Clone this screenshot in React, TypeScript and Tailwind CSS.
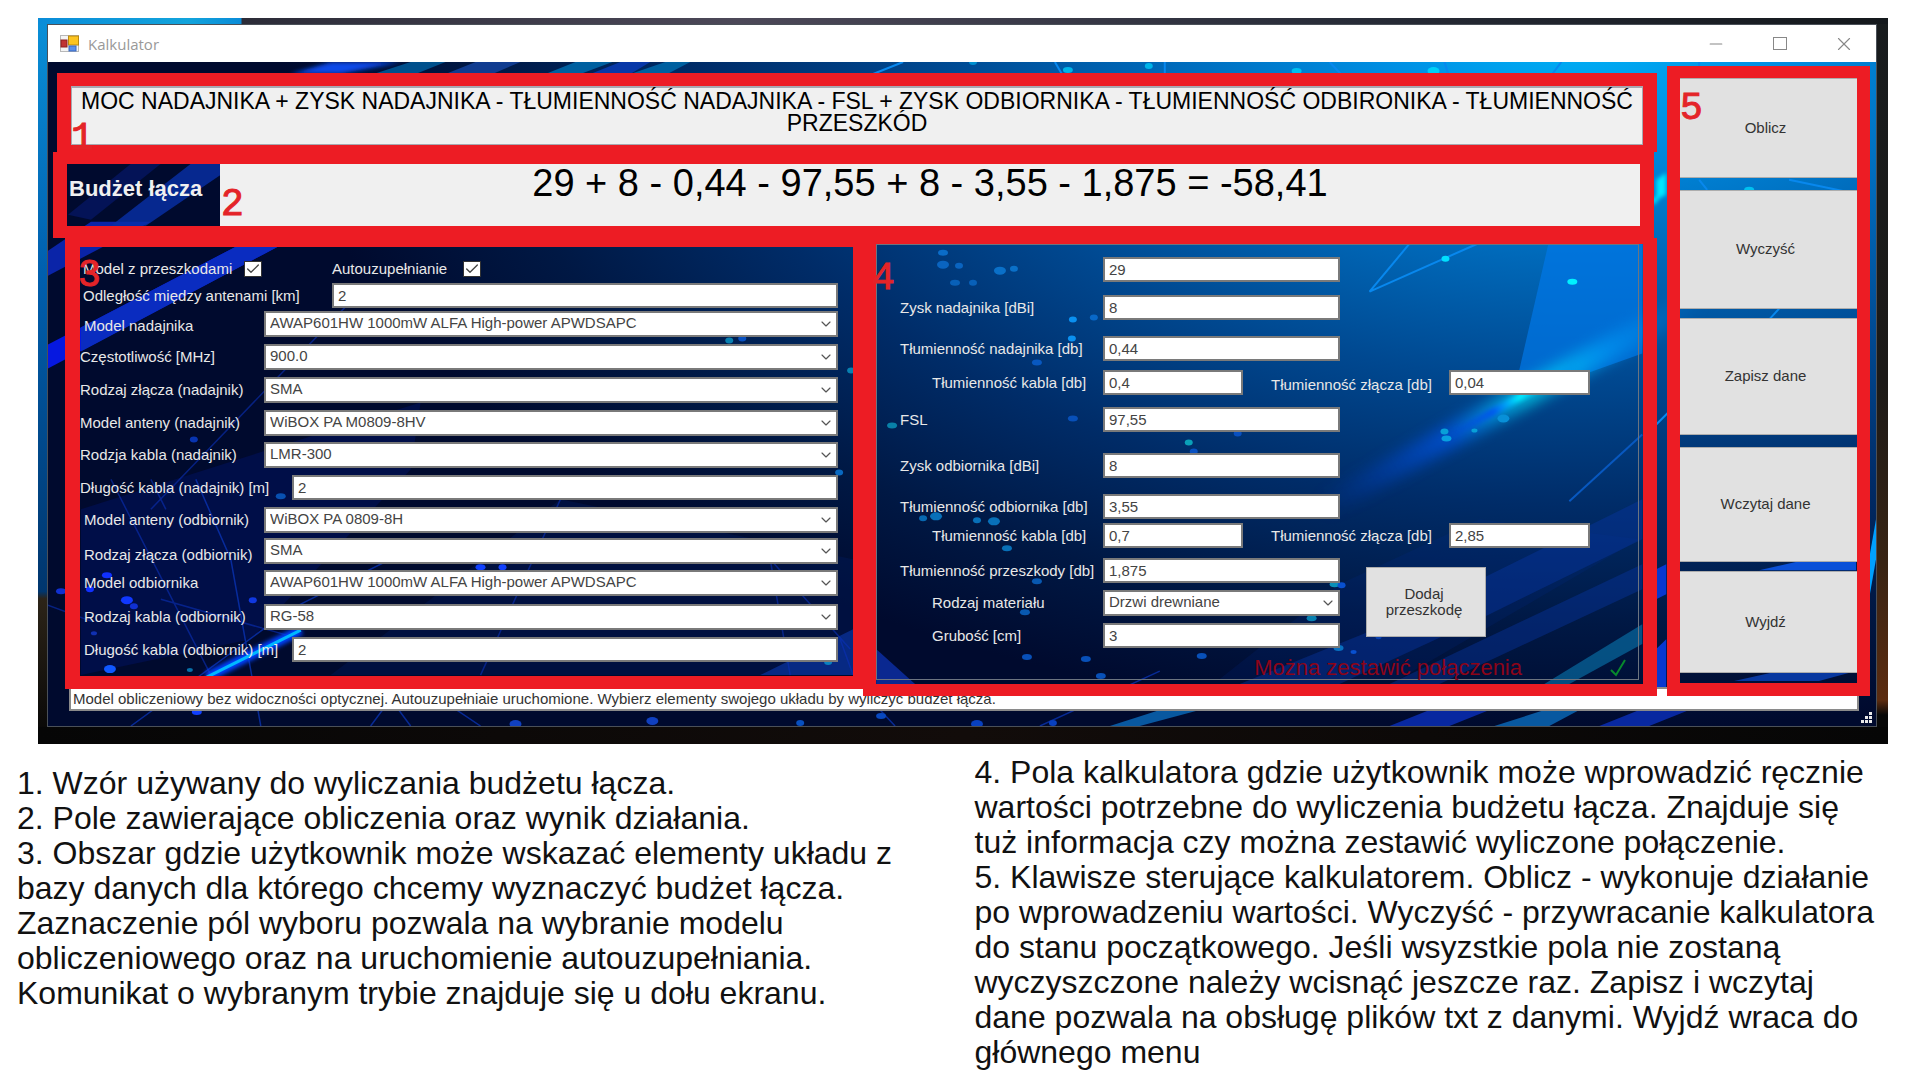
import type { ReactNode } from "react";
import { Check, ChevronDown, Minus, Square, X } from "lucide-react";

const fieldClass =
  "block w-full rounded-none border-2 border-[#7a7a7a] bg-white pl-1 text-[15px] leading-[18px] text-[#444] outline-none";

type Row = {
  id: string;
  label: string;
  value: string;
  kind: "select" | "input";
  gap: string;
  labelClass: string;
};

const W_WIDE = "w-[252px]";
const W_SELECT = "w-[184px]";
const W_LENGTH = "w-[212px]";

const rows: Row[] = [
  { id: "dist", label: "Odległość między antenami [km]", value: "2", kind: "input", gap: "mt-[7px]", labelClass: W_WIDE + " pl-[3px]" },
  { id: "tx", label: "Model nadajnika", value: "AWAP601HW 1000mW ALFA High-power APWDSAPC", kind: "select", gap: "mt-[3px]", labelClass: W_SELECT + " pl-1 pt-1" },
  { id: "freq", label: "Częstotliwość [MHz]", value: "900.0", kind: "select", gap: "mt-[7px]", labelClass: W_SELECT },
  { id: "conTx", label: "Rodzaj złącza (nadajnik)", value: "SMA", kind: "select", gap: "mt-[7px]", labelClass: W_SELECT },
  { id: "antTx", label: "Model anteny (nadajnik)", value: "WiBOX PA M0809-8HV", kind: "select", gap: "mt-[7px]", labelClass: W_SELECT },
  { id: "cabTx", label: "Rodzja kabla (nadajnik)", value: "LMR-300", kind: "select", gap: "mt-[6px]", labelClass: W_SELECT },
  { id: "lenTx", label: "Długość kabla (nadajnik) [m]", value: "2", kind: "input", gap: "mt-[7px]", labelClass: W_LENGTH },
  { id: "antRx", label: "Model anteny (odbiornik)", value: "WiBOX PA 0809-8H", kind: "select", gap: "mt-[7px]", labelClass: W_SELECT + " pl-1" },
  { id: "conRx", label: "Rodzaj złącza (odbiornik)", value: "SMA", kind: "select", gap: "mt-[5px]", labelClass: W_SELECT + " pl-1 pt-2" },
  { id: "rx", label: "Model odbiornika", value: "AWAP601HW 1000mW ALFA High-power APWDSAPC", kind: "select", gap: "mt-[6px]", labelClass: W_SELECT + " pl-1" },
  { id: "cabRx", label: "Rodzaj kabla (odbiornik)", value: "RG-58", kind: "select", gap: "mt-[8px]", labelClass: W_SELECT + " pl-1" },
  { id: "lenRx", label: "Długość kabla (odbiornik) [m]", value: "2", kind: "input", gap: "mt-[7px]", labelClass: W_LENGTH + " pl-1" },
];

function TextField({ id, value, label }: { id: string; value: string; label?: string }) {
  return <input id={id} type="text" defaultValue={value} aria-label={label} className={fieldClass + " h-[25px]"} />;
}

function SelectField({ id, value }: { id: string; value: string }) {
  return (
    <div className="grid items-center">
      <select id={id} defaultValue={value} className={fieldClass + " col-start-1 row-start-1 h-[26px] appearance-none pb-0.5"}>
        <option>{value}</option>
      </select>
      <ChevronDown className="pointer-events-none col-start-1 row-start-1 mr-1 size-4 justify-self-end text-[#555]" strokeWidth={1.75} />
    </div>
  );
}

function CheckField({ id, label, className }: { id: string; label: string; className: string }) {
  return (
    <div className={"flex items-center " + className}>
      <label htmlFor={id} className="whitespace-nowrap">{label}</label>
      <span className="grid place-items-center">
        <input id={id} type="checkbox" defaultChecked className="peer col-start-1 row-start-1 h-4 w-[18px] appearance-none border border-[#333] bg-white" />
        <Check className="pointer-events-none invisible col-start-1 row-start-1 size-4 text-[#444] peer-checked:visible" strokeWidth={2} />
      </span>
    </div>
  );
}

function Marker({ n, className }: { n: string; className: string }) {
  return (
    <span aria-hidden="true" className={"pointer-events-none absolute z-20 font-['Liberation_Mono',monospace] text-[38px] leading-[38px] text-[#e42428] [-webkit-text-stroke:1px_#e42428] " + className}>
      {n}
    </span>
  );
}

function ValueRow({ id, label, value, gap, sub, half, children }: {
  id: string; label: string; value: string; gap: string; sub?: boolean; half?: boolean; children?: ReactNode;
}) {
  return (
    <div className={"flex items-center " + gap}>
      <label htmlFor={id} className={sub ? "w-[203px] shrink-0 whitespace-nowrap pl-8" : "w-[203px] shrink-0 whitespace-nowrap"}>{label}</label>
      <div className={half ? "w-[140px]" : "w-[237px]"}>
        <TextField id={id} value={value} />
      </div>
      {children}
    </div>
  );
}

function ConnectorLoss({ id, value, labelClass }: { id: string; value: string; labelClass?: string }) {
  return (
    <>
      <label htmlFor={id} className={"ml-7 w-[178px] shrink-0 whitespace-nowrap " + (labelClass ?? "")}>Tłumienność złącza [db]</label>
      <div className="w-[141px]"><TextField id={id} value={value} /></div>
    </>
  );
}

const dots: [number, number, number, string][] = [
  [943, 253, 5, "#0a6cc8"], [943, 265, 6, "#0a64c0"], [959, 266, 4, "#0a64c0"], [1000, 271, 6, "#0a70c8"], [1014, 269, 4, "#0a70c8"],
  [955, 283, 5, "#0860b8"], [973, 283, 4, "#0860b8"], [1073, 320, 4, "#0a90f0"], [1094, 318, 4, "#0868c8"], [1072, 339, 4, "#0a90f0"],
  [1037, 363, 5, "#0858c0"], [892, 426, 5, "#0880a8"], [1073, 419, 5, "#0850b8"], [1238, 434, 4, "#0850c0"], [1189, 443, 4, "#0aa0b8"], [1194, 452, 4, "#0850c0"],
  [923, 519, 4, "#0868b0"], [936, 517, 6, "#0870b8"], [977, 521, 4, "#0870b8"], [994, 522, 6, "#0870b8"], [1007, 549, 5, "#0870b8"],
  [1037, 582, 5, "#0858b0"], [1025, 613, 5, "#0858b0"], [1027, 658, 5, "#0850b8"], [1086, 660, 5, "#0850b8"], [1202, 657, 5, "#0850b8"], [1101, 677, 5, "#0850b8"],
  [1335, 585, 5, "#0890b8"], [1342, 586, 4, "#0850d0"], [1312, 619, 5, "#0880b0"], [1339, 649, 5, "#0870c0"], [1354, 653, 3, "#0850d0"], [1379, 638, 3, "#0840b0"],
  [1446, 259, 4, "#00e0ff"], [1573, 282, 5, "#00f0ff"], [1504, 419, 6, "#0890d8"], [1445, 432, 4, "#08a0d8"], [1475, 431, 3, "#08a0d8"], [1447, 439, 5, "#08a0e0"],
  [1068, 70, 5, "#00b4e8"], [1149, 66, 4, "#00b4e8"], [973, 62, 4, "#0090d0"], [1297, 71, 5, "#00c0f0"], [1434, 71, 6, "#00d0f8"], [1750, 190, 5, "#00c0f0"],
  [193, 440, 4, "#0834b0"], [280, 497, 5, "#0850b0"], [729, 341, 4, "#0880b0"], [742, 339, 4, "#0850c0"], [851, 371, 4, "#0880b0"], [839, 473, 4, "#0868c0"],
  [106, 576, 5, "#1030ff"], [89, 590, 4, "#1030ff"], [126, 601, 6, "#1038ff"], [133, 607, 4, "#1030d0"], [252, 601, 4, "#1038e0"], [60, 592, 5, "#1030d0"],
  [109, 670, 6, "#1058ff"], [93, 634, 3, "#1030b0"], [189, 671, 3, "#0870a8"], [196, 713, 5, "#1040ff"], [515, 725, 6, "#1040c0"], [652, 722, 6, "#1040c0"],
  [800, 724, 4, "#0850c0"], [480, 568, 5, "#1040ff"], [502, 568, 4, "#1040ff"], [828, 663, 4, "#0880c0"], [881, 717, 5, "#0848c0"], [977, 725, 6, "#0840c0"], [1053, 724, 4, "#0840c0"],
];

function FormBackdrop() {
  return (
    <svg aria-hidden="true" className="absolute inset-0 size-full" viewBox="47 62 1830 665" preserveAspectRatio="none">
      <defs>
        <radialGradient id="sky" gradientUnits="userSpaceOnUse" cx="0" cy="0" r="1" gradientTransform="translate(1580 30) scale(1300 700)">
          <stop offset="0" stopColor="#00b4f8" />
          <stop offset="0.15" stopColor="#0090e4" />
          <stop offset="0.33" stopColor="#0068b8" />
          <stop offset="0.5" stopColor="#004890" />
          <stop offset="0.68" stopColor="#002c68" />
          <stop offset="0.85" stopColor="#001844" />
          <stop offset="1" stopColor="#000a2e" />
        </radialGradient>
        <linearGradient id="beam" x1="0" x2="1">
          <stop offset="0" stopColor="#0040d0" stopOpacity="0" />
          <stop offset="0.35" stopColor="#0058f0" />
          <stop offset="0.55" stopColor="#00f0ff" />
          <stop offset="0.75" stopColor="#009cf8" />
          <stop offset="1" stopColor="#0080e8" stopOpacity="0" />
        </linearGradient>
        <filter id="soft" x="-20%" y="-200%" width="140%" height="500%"><feGaussianBlur stdDeviation="7" /></filter>
        <filter id="glow" x="-50%" y="-50%" width="200%" height="200%"><feGaussianBlur stdDeviation="2" /></filter>
      </defs>
      <rect x="47" y="62" width="1830" height="665" fill="url(#sky)" />
      <path d="M47 251L90 222L150 222L47 276Z" fill="#0a24a8" />
      <path d="M47 345L235 247H277L47 369Z" fill="#0618e0" />
      <path d="M80 328L235 247H277L80 352Z" fill="#0a2cc0" />
      <path d="M110 226L190 164H220V175L145 226Z" fill="#0830a8" opacity="0.8" />
      <path d="M67 215L130 164H160L90 220Z" fill="#081c80" opacity="0.5" />
      <path d="M290 74L330 62H400L340 74Z" fill="#0848e8" filter="url(#glow)" />
      <path d="M373 74L410 62H445L415 74Z" fill="#00508c" />
      <path d="M445 74L475 62H520L492 74Z" fill="#103c90" />
      <path d="M545 74L575 62H612L580 74ZM630 74L665 62H690L667 74Z" fill="#0060a0" />
      <path d="M590 74L620 62H650L630 74Z" fill="#0838a8" />
      <path d="M80 510L300 440L420 403L410 470L250 640L80 676Z" fill="#001470" opacity="0.4" />
      <path d="M430 600L560 500L853 560V676H330Z" fill="#001c60" opacity="0.35" />
      <path d="M760 676L853 630V676Z" fill="#0a34a0" opacity="0.7" />
      <path d="M876 650L915 685H876Z" fill="#0a2890" />
      <path d="M345 307L150 510M150 480L165 510M160 600L300 640M110 480L210 676M47 606L90 622M560 500L480 676M770 560L790 676M770 560L850 650M840 640L853 676" stroke="#0a30b8" strokeWidth="1.5" fill="none" opacity="0.6" />
      <path d="M195 480L230 560L260 727M130 727L290 610L430 540M370 727L390 700L410 727M440 700L480 727M1040 727L1160 672M880 711L895 727" stroke="#0a38c0" strokeWidth="1.5" fill="none" opacity="0.7" />
      <path d="M206 678L300 631" stroke="#0040ff" strokeWidth="10" filter="url(#glow)" />
      <path d="M206 678L300 631" stroke="#00b8ff" strokeWidth="3" />
      <path d="M1549 244L1520 370V398L1643 354V244Z" fill="#0078e8" opacity="0.7" />
      <path d="M1410 244L1370 292L1478 244M1330 62L1345 78M1445 62L1450 78M1562 62L1550 78M1670 412L1657 425M1055 62L1062 74M1165 62V74M903 62L873 74M1700 180L1708 190M1790 180L1857 194M1780 309L1770 320M1700 62V74" stroke="#0888ee" strokeWidth="2" fill="none" />
      <path d="M1643 435L1570 502" stroke="#0858c0" strokeWidth="2" />
      <path d="M1340 585L1480 520L1640 540L1400 680H1220Z" fill="#00309c" opacity="0.15" />
      <path d="M1340 685L1480 620L1643 540V500L1400 620L1240 685ZM1440 685L1643 590V565L1390 685Z" fill="#0838a8" opacity="0.4" />
      <path d="M1570 685L1643 645V625L1545 685Z" fill="#0878b0" opacity="0.6" />
      <path d="M1657 600V570L1667 565V595ZM1657 690V650L1667 640V690Z" fill="#0838d0" />
      <path d="M1657 200V180L1667 173V195ZM1655 205L1650 201L1667 190" fill="#00e8ff" filter="url(#glow)" />
      <path d="M1760 571L1800 562H1857V571Z" fill="#0a50d8" />
      <path d="M1735 682L1780 672H1857L1820 682Z" fill="#0838a0" />
      <path d="M1870 560V600L1877 560V520Z" fill="#00a0ff" />
      <path d="M1495 727L1545 711H1580L1550 727ZM1110 727L1160 711H1200L1140 727Z" fill="#0858a0" />
      <path d="M1390 727L1430 711H1490L1450 727ZM1600 727L1640 711H1690L1650 727Z" fill="#0828a0" />
      <g transform="rotate(-29 1510 405)">
        <rect x="1290" y="392" width="440" height="24" fill="url(#beam)" filter="url(#soft)" opacity="0.65" />
        <rect x="1440" y="400" width="150" height="7" fill="url(#beam)" filter="url(#glow)" />
      </g>
      {dots.map(([x, y, r, c]) => (
        <ellipse key={x + "-" + y} cx={x} cy={y} rx={r} ry={r > 4 ? r - 2 : r - 1} fill={c} />
      ))}
    </svg>
  );
}

function TitleBar() {
  const control = "grid h-9 w-16 place-items-center text-[#888]";
  return (
    <header className="flex h-[37px] items-center bg-white pl-3">
      <svg aria-hidden="true" viewBox="0 0 20 18" className="h-[18px] w-5">
        <rect x="0.5" y="0.5" width="18" height="16" fill="#f4f4f4" stroke="#b8b8b8" />
        <rect x="1" y="5" width="6" height="7" fill="#c03434" stroke="#8c2020" />
        <rect x="8.5" y="1" width="10" height="9" fill="#fcc420" stroke="#b88810" />
        <rect x="9" y="11" width="7" height="5" fill="#5a90ec" stroke="#3868c0" />
      </svg>
      <h1 className="ml-2 flex-1 font-['Open_Sans',sans-serif] text-[15px] leading-5 text-[#999]">Kalkulator</h1>
      <button type="button" aria-label="Minimalizuj" className={control}><Minus className="size-5" strokeWidth={1.25} /></button>
      <button type="button" aria-label="Maksymalizuj" className={control}>
        <svg aria-hidden="true" viewBox="0 0 14 13" className="h-[13px] w-3.5"><rect x="0.5" y="0.5" width="13" height="12" fill="none" stroke="currentColor" /></svg>
      </button>
      <button type="button" aria-label="Zamknij" className={control}><X className="size-[22px]" strokeWidth={1.25} /></button>
    </header>
  );
}

function TransmitterPanel() {
  return (
    <section aria-label="Elementy układu" className="relative self-start border-b-[13px] border-l-[15px] border-r-[10px] border-t-[9px] border-[#ed1c24] pb-[14px] pr-[15px] pt-[13px] text-[15px] leading-[18px] text-[#e8e8e8]">
      <Marker n="3" className="-left-0.5 top-2.5" />
      <div className="flex h-4 items-center pt-0.5">
        <CheckField id="obstacles" label="Model z przeszkodami" className="w-[182px] justify-between pl-[3px]" />
        <CheckField id="autofill" label="Autouzupełnianie" className="ml-[70px] w-[149px] justify-between" />
      </div>
      {rows.map((r) => (
        <div key={r.id} className={"flex items-center " + r.gap}>
          <label htmlFor={r.id} className={"shrink-0 whitespace-nowrap " + r.labelClass}>{r.label}</label>
          <div className="min-w-0 flex-1">
            {r.kind === "select" ? <SelectField id={r.id} value={r.value} /> : <TextField id={r.id} value={r.value} />}
          </div>
        </div>
      ))}
    </section>
  );
}

function ValuesPanel() {
  return (
    <section aria-label="Pola kalkulatora" className="relative z-10 border-b-[12px] border-l-[13px] border-r-[14px] border-t-[6px] border-[#ed1c24] pb-1 pr-1 text-[15px] leading-[18px] text-[#e8e8e8]">
      <Marker n="4" className="-left-1 top-4" />
      <div className="border border-[#6c7480] pl-[23px] pt-3">
        <div className="ml-[203px] w-[237px]"><TextField id="power" value="29" label="Moc nadajnika" /></div>
        <ValueRow id="gainTx" label="Zysk nadajnika [dBi]" value="8" gap="mt-[13px]" />
        <ValueRow id="lossTx" label="Tłumienność nadajnika [db]" value="0,44" gap="mt-[16px]" />
        <ValueRow id="cableTx" label="Tłumienność kabla [db]" value="0,4" gap="mt-[9px]" sub half>
          <ConnectorLoss id="connTx" value="0,04" labelClass="pt-1" />
        </ValueRow>
        <ValueRow id="fsl" label="FSL" value="97,55" gap="mt-[12px]" />
        <ValueRow id="gainRx" label="Zysk odbiornika [dBi]" value="8" gap="mt-[21px]" />
        <ValueRow id="lossRx" label="Tłumienność odbiornika [db]" value="3,55" gap="mt-[16px]" />
        <ValueRow id="cableRx" label="Tłumienność kabla [db]" value="0,7" gap="mt-[4px]" sub half>
          <ConnectorLoss id="connRx" value="2,85" />
        </ValueRow>
        <div className="mt-[10px] flex items-start">
          <div>
            <ValueRow id="lossOb" label="Tłumienność przeszkody [db]" value="1,875" gap="" />
            <div className="mt-[7px] flex items-center">
              <label htmlFor="material" className="w-[203px] pl-8">Rodzaj materiału</label>
              <div className="w-[237px]"><SelectField id="material" value="Drzwi drewniane" /></div>
            </div>
            <ValueRow id="thick" label="Grubość [cm]" value="3" gap="mt-[7px]" sub />
          </div>
          <button type="button" className="ml-[26px] mt-[9px] h-[70px] w-[120px] border border-[#adadad] bg-[#e1e1e1] pr-1 leading-4 text-[#333]">
            Dodaj<br />przeszkodę
          </button>
        </div>
        <div className="flex h-[31px] items-center justify-end pr-3 pt-2">
          <output className="text-[22px] leading-[22px] text-[#8c0418]">Można zestawić połączenia</output>
          <svg aria-hidden="true" viewBox="0 0 16 18" className="ml-[88px] h-[18px] w-4"><path d="M1 11L6 16L15 1" fill="none" stroke="#078a2c" strokeWidth="2" /></svg>
        </div>
      </div>
    </section>
  );
}

function SideButtons() {
  const base = "w-full border-y border-[#adadad] bg-[#e1e1e1] pr-1.5 text-[15px] text-[#333]";
  return (
    <nav aria-label="Sterowanie" className="relative z-10 mt-1 w-[203px] shrink-0 self-start border-x-[13px] border-b-[13px] border-t-[12px] border-[#ed1c24] pb-[10px]">
      <Marker n="5" className="left-0 top-3" />
      <button type="button" className={base + " block h-[100px]"}>Oblicz</button>
      <button type="button" className={base + " mt-3 block h-[119px]"}>Wyczyść</button>
      <button type="button" className={base + " mt-[9px] block h-[117px]"}>Zapisz dane</button>
      <button type="button" className={base + " mt-3 block h-[115px]"}>Wczytaj dane</button>
      <button type="button" className={base + " mt-[9px] block h-[102px]"}>Wyjdź</button>
    </nav>
  );
}

function SizeGrip() {
  return (
    <svg aria-hidden="true" viewBox="0 0 12 12" className="absolute bottom-0.5 right-1 size-3" fill="#e8e8e8">
      <path d="M9 0h3v3H9zM9 4h3v3H9zM9 8h3v3H9zM5 4h3v3H5zM5 8h3v3H5zM1 8h3v3H1z" />
    </svg>
  );
}

export default function App() {
  return (
    <main className="min-h-screen bg-white pl-[38px] pr-8 pt-[18px] font-['Liberation_Sans',Arial,sans-serif]">
      <div className="bg-[linear-gradient(90deg,#0a8cd8_0,#12a4dc_150px,#0a8cd8_203px,#2c2c38_204px,#4c4858_700px,#282c38_1300px,#14181c_100%),linear-gradient(90deg,#060606,#120c0a_50%,#060606),linear-gradient(180deg,#181c1e_0%,#1c1a18_50%,#382414_75%,#5c2c10_94%,#080808_96%),linear-gradient(180deg,#0a90d8_0%,#005fae_35%,#00366e_79%,#2c2418_80%,#060606_100%)] bg-[length:100%_6px,100%_17px,11px_100%,9px_100%] bg-[position:top,bottom,right,left] bg-no-repeat pb-[17px] pl-[9px] pr-[11px] pt-[6px]">
        <div className="border border-[#4a5058]">
          <TitleBar />
          <div className="relative bg-[#001848] pb-[15px] pl-[5px] pr-[6px]">
            <FormBackdrop />
            <div className="relative z-10 flex gap-[10px]">
              <div className="min-w-0 flex-1 pt-[11px]">
                <div className="relative ml-1 border-x-[14px] border-b-[7px] border-t-[13px] border-[#ed1c24]">
                  <Marker n="1" className="left-0 top-[34px]" />
                  <p className="h-[59px] border border-t-2 border-[#a8a8b0] bg-[#f0f0f0] pt-0.5 text-center text-[23px] leading-[22px] text-black">
                    MOC NADAJNIKA + ZYSK NADAJNIKA - TŁUMIENNOŚĆ NADAJNIKA - FSL + ZYSK ODBIORNIKA - TŁUMIENNOŚĆ ODBIRONIKA - TŁUMIENNOŚĆ PRZESZKÓD
                  </p>
                </div>
                <div className="relative mr-[3px] flex border-x-[14px] border-y-[12px] border-[#ed1c24]">
                  <Marker n="2" className="left-[154px] top-[22px]" />
                  <label htmlFor="result" className="w-[153px] whitespace-nowrap pl-0.5 pt-3 text-[22px] font-bold leading-[26px] text-[#f0f0f0]">Budżet łącza</label>
                  <output id="result" className="block h-[62px] flex-1 bg-[#f0f0f0] text-center text-[38px] leading-[38px] text-black">
                    29 + 8 - 0,44 - 97,55 + 8 - 3,55 - 1,875 = -58,41
                  </output>
                </div>
                <div className="grid grid-cols-[798fr_794fr] pl-3">
                  <TransmitterPanel />
                  <ValuesPanel />
                </div>
              </div>
              <SideButtons />
            </div>
            <p role="status" className="relative -mt-[9px] ml-4 mr-[11px] h-6 border-2 border-[#8a8a8a] bg-white pl-0.5 text-[15px] leading-5 text-[#333]">
              Model obliczeniowy bez widoczności optycznej. Autouzupełniaie uruchomione. Wybierz elementy swojego układu by wyliczyć budżet łącza.
            </p>
            <SizeGrip />
          </div>
        </div>
      </div>
      <div className="-ml-[21px] -mr-7 grid grid-cols-2 text-[32px] leading-[35px] text-[#111]">
        <div className="mt-[22px] whitespace-nowrap">
          <p>1. Wzór używany do wyliczania budżetu łącza.</p>
          <p>2. Pole zawierające obliczenia oraz wynik działania.</p>
          <p>
            3. Obszar gdzie użytkownik może wskazać elementy układu z<br />
            bazy danych dla którego chcemy wyznaczyć budżet łącza.<br />
            Zaznaczenie pól wyboru pozwala na wybranie modelu<br />
            obliczeniowego oraz na uruchomienie autouzupełniania.<br />
            Komunikat o wybranym trybie znajduje się u dołu ekranu.
          </p>
        </div>
        <div className="mt-[11px] whitespace-nowrap pl-2">
          <p>
            4. Pola kalkulatora gdzie użytkownik może wprowadzić ręcznie<br />
            wartości potrzebne do wyliczenia budżetu łącza. Znajduje się<br />
            tuż informacja czy można zestawić wyliczone połączenie.
          </p>
          <p>
            5. Klawisze sterujące kalkulatorem. Oblicz - wykonuje działanie<br />
            po wprowadzeniu wartości. Wyczyść - przywracanie kalkulatora<br />
            do stanu początkowego. Jeśli wsyzstkie pola nie zostaną<br />
            wyczyszczone należy wcisnąć jeszcze raz. Zapisz i wczytaj<br />
            dane pozwala na obsługę plików txt z danymi. Wyjdź wraca do<br />
            głównego menu
          </p>
        </div>
      </div>
    </main>
  );
}
